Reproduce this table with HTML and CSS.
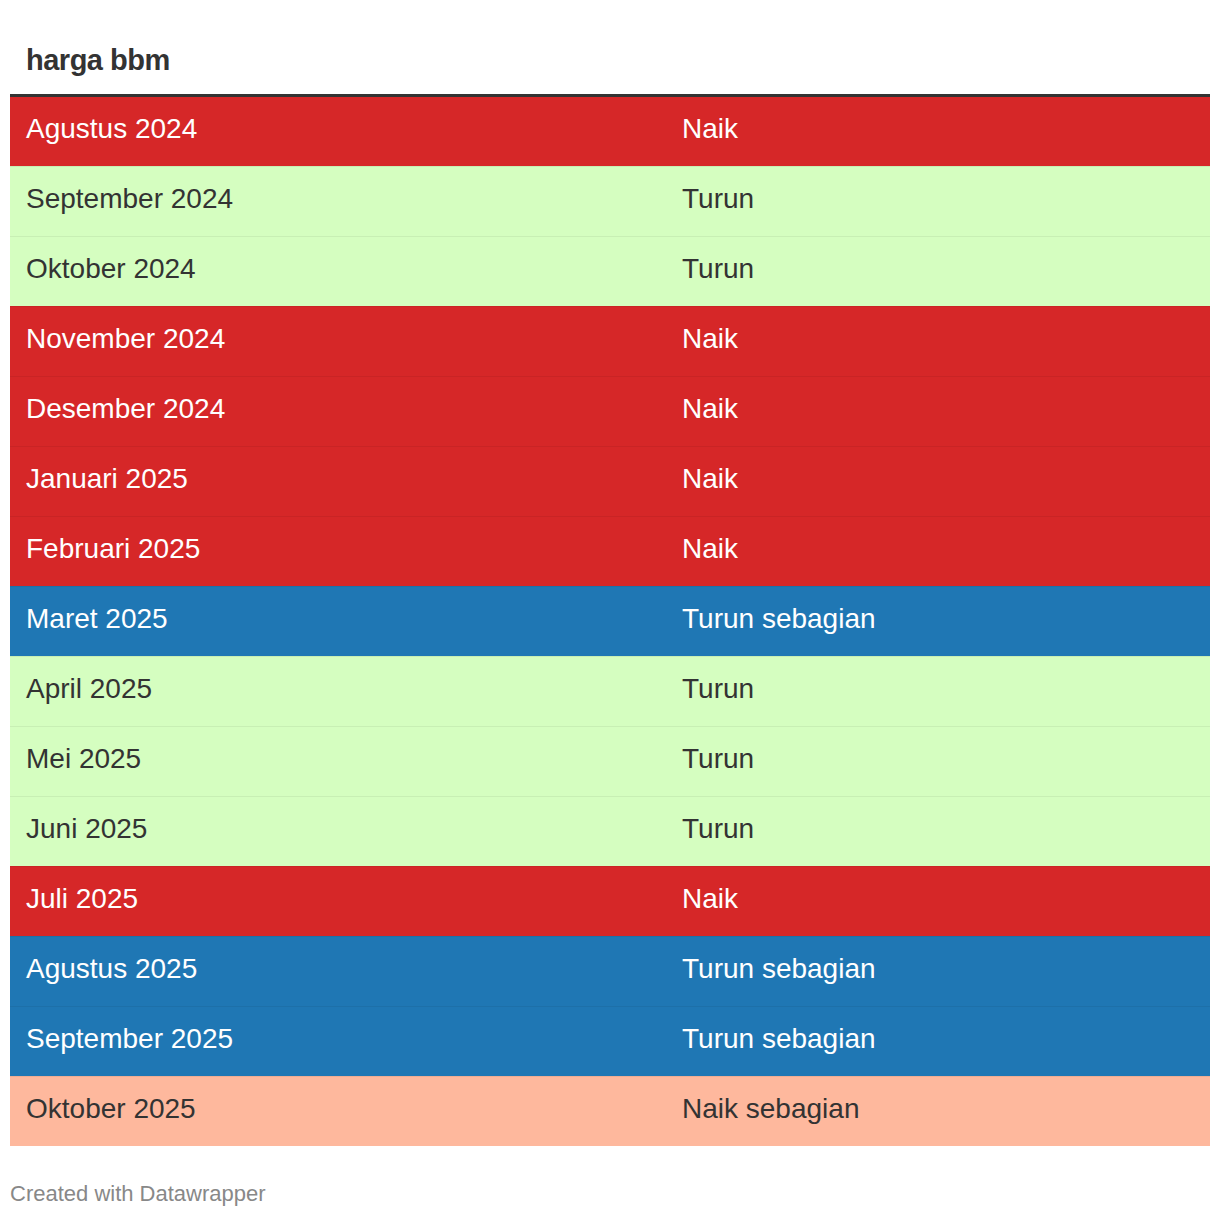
FILE: index.html
```html
<!DOCTYPE html>
<html lang="id">
<head>
<meta charset="utf-8">
<title>harga bbm</title>
<link rel="stylesheet" href="styles.css">
</head>
<body>
<div class="chart">
  <h1 class="title">harga bbm</h1>
  <div class="table">
    <div class="row red"><div class="cell">Agustus 2024</div><div class="cell">Naik</div></div>
    <div class="row green"><div class="cell">September 2024</div><div class="cell">Turun</div></div>
    <div class="row green"><div class="cell">Oktober 2024</div><div class="cell">Turun</div></div>
    <div class="row red"><div class="cell">November 2024</div><div class="cell">Naik</div></div>
    <div class="row red"><div class="cell">Desember 2024</div><div class="cell">Naik</div></div>
    <div class="row red"><div class="cell">Januari 2025</div><div class="cell">Naik</div></div>
    <div class="row red"><div class="cell">Februari 2025</div><div class="cell">Naik</div></div>
    <div class="row blue"><div class="cell">Maret 2025</div><div class="cell">Turun sebagian</div></div>
    <div class="row green"><div class="cell">April 2025</div><div class="cell">Turun</div></div>
    <div class="row green"><div class="cell">Mei 2025</div><div class="cell">Turun</div></div>
    <div class="row green"><div class="cell">Juni 2025</div><div class="cell">Turun</div></div>
    <div class="row red"><div class="cell">Juli 2025</div><div class="cell">Naik</div></div>
    <div class="row blue"><div class="cell">Agustus 2025</div><div class="cell">Turun sebagian</div></div>
    <div class="row blue"><div class="cell">September 2025</div><div class="cell">Turun sebagian</div></div>
    <div class="row salmon"><div class="cell">Oktober 2025</div><div class="cell">Naik sebagian</div></div>
  </div>
  <div class="footer">Created with Datawrapper</div>
</div>
</body>
</html>
```

FILE: styles.css
```css
html, body {
  margin: 0;
  padding: 0;
  background: #ffffff;
}

body {
  font-family: "Liberation Sans", Arial, Helvetica, sans-serif;
  color: #333333;
}

.chart {
  padding: 10px;
}

.title {
  margin: 32px 0 16px 0;
  padding-left: 16px;
  font-size: 29px;
  line-height: 36px;
  font-weight: bold;
  letter-spacing: -0.5px;
  color: #333333;
}

.table {
  border-top: 3px solid #333333;
}

.row {
  display: grid;
  grid-template-columns: 656px 1fr;
  font-size: 28px;
  line-height: 36px;
  border-top: 1px solid rgba(0, 0, 0, 0.06);
}

.row:first-child {
  border-top: none;
}

.cell {
  padding: 14px 16px 19px 16px;
}

.red {
  background: #d62728;
  color: #ffffff;
}

.green {
  background: #d5fec0;
  color: #333333;
}

.blue {
  background: #1f77b4;
  color: #ffffff;
}

.salmon {
  background: #feb89d;
  color: #333333;
}

.footer {
  margin-top: 35px;
  font-size: 22px;
  line-height: 26px;
  color: #888888;
}
```
